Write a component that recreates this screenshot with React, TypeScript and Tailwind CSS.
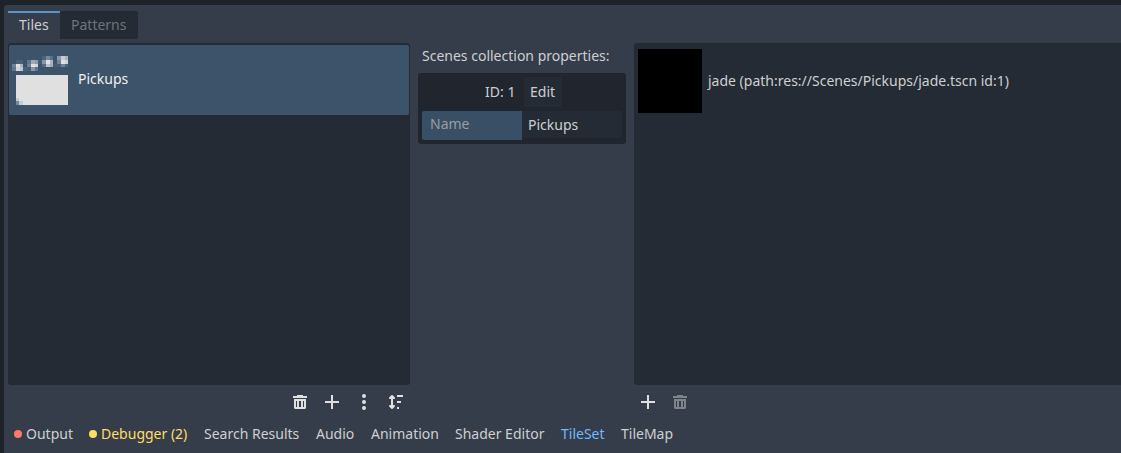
import React from "react";

const C = 3.75;

// Preview cells: [column, row, colour] on a 3.75px grid.
const cells: [number, number, string][] = [
  [1, 1, "#47617a"], [2, 1, "#47617a"],
  [0, 2, "#6c8397"], [1, 2, "#e0e0e0"], [2, 2, "#a9b5bf"],
  [0, 3, "#5f778d"], [1, 3, "#d2d6da"], [2, 3, "#c0c8cf"], [3, 3, "#47617a"],
  [4, 1, "#5f778d"], [5, 1, "#9dabb8"], [6, 1, "#8b9cab"],
  [4, 2, "#6c8397"], [5, 2, "#e0e0e0"], [6, 2, "#d2d6da"],
  [4, 3, "#445d75"], [5, 3, "#8799a9"], [6, 3, "#5f778d"],
  [8, 0, "#4b647c"], [9, 0, "#73899c"], [10, 0, "#5a7288"],
  [7, 1, "#445d75"], [8, 1, "#8799a9"], [9, 1, "#e0e0e0"], [10, 1, "#a9b5bf"],
  [8, 2, "#536c83"], [9, 2, "#b9c2ca"], [10, 2, "#a0aeba"], [11, 2, "#445d75"],
  [12, 0, "#8799a9"], [13, 0, "#c5ccd3"], [14, 0, "#a9b5bf"],
  [12, 1, "#6c8397"], [13, 1, "#e0e0e0"], [14, 1, "#cfd4d9"],
  [12, 2, "#445d75"], [13, 2, "#6c8397"], [14, 2, "#4b647c"],
];

function Preview() {
  return (
    <svg width="60" height="52" viewBox="0 0 60 52" shapeRendering="crispEdges" className="mt-[11px] ml-[3px] shrink-0">
      {cells.map(([x, y, fill], i) => (
        <rect key={i} x={x * C} y={y * C} width={C} height={C} fill={fill} />
      ))}
      <rect x="4" y="19" width="52" height="30" fill="#e0e0e0" />
      <rect x="4" y="42" width="3" height="3" fill="#c4cbd1" />
      <rect x="4" y="45" width="3" height="4" fill="#73899c" />
      <rect x="7" y="45" width="4" height="4" fill="#c4cbd1" />
    </svg>
  );
}

const icons = {
  trash: "M5 1v1H1v2h14V2h-4V1zM2 5v8.5A1.5 1.5 0 0 0 3.5 15h9a1.5 1.5 0 0 0 1.5-1.5V5zm2 2h1v6H4zm3 0h2v6H7zm4 0h1v6h-1z",
  add: "M7 1v6H1v2h6v6h2V9h6V7H9V1z",
  more: "M8 0a2 2 0 0 0 0 4 2 2 0 0 0 0-4m0 6a2 2 0 0 0 0 4 2 2 0 0 0 0-4m0 6a2 2 0 0 0 0 4 2 2 0 0 0 0-4",
  sort: "M4 1a1 1 0 0 0-.7.3l-2 2A1 1 0 0 0 2 5h1v6H2a1 1 0 0 0-.7 1.7l2 2a1 1 0 0 0 1.4 0l2-2A1 1 0 0 0 6 11H5V5h1a1 1 0 0 0 .7-1.7l-2-2A1 1 0 0 0 4 1m5 0h6v2H9zm0 6h4v2H9zm0 6h2v2H9z",
};

function Icon({ name, dim = false }: { name: keyof typeof icons; dim?: boolean }) {
  return (
    <button className="flex size-4 items-center justify-center">
      <svg width="16" height="16" viewBox="0 0 16 16" fillRule="evenodd" className={dim ? "fill-[#7f838a]" : "fill-[#e0e0e0]"}>
        <path d={icons[name]} />
      </svg>
    </button>
  );
}

export default function App() {
  return (
    <div className="h-[453px] w-[1121px] overflow-hidden bg-[#1e2229] pt-[5px] pl-1 font-['Noto_Sans',sans-serif] text-[14px] leading-5 whitespace-nowrap text-[#cdcfd2]">
      <div className="flex h-[448px] flex-col rounded-tl-[3px] bg-[#363d4a] pt-1.5 pl-1">
        <div className="flex h-7">
          <div className="w-[52px] border-t-2 border-[#5792c9] pt-[2px] pl-[11px]">Tiles</div>
          <div className="w-[78px] rounded-r-[2px] bg-[#252b34] pt-1 pl-[11px] text-[#6e7379]">Patterns</div>
        </div>

        <div className="mt-1 flex h-[342px]">
          <div className="w-[402px] rounded-[3px] bg-[#252b34] px-px pt-[2px]">
            <div className="flex h-[70px] rounded-[2px] bg-[#3c536a] text-[#f0f1f2]">
              <Preview />
              <span className="mt-6 ml-[6px]">Pickups</span>
            </div>
          </div>

          <div className="ml-2 w-[208px]">
            <div className="h-[30px] pt-[3px] pl-1">Scenes collection properties:</div>
            <div className="h-[71px] rounded-[3px] bg-[#21262e] px-1 pt-1">
              <div className="flex h-[30px]">
                <span className="w-[102px] pt-[5px] pr-[8.6px] text-right">ID: 1</span>
                <button className="h-[30px] w-[38px] rounded-[3px] bg-[#252b34] pl-1.5 text-left">Edit</button>
              </div>
              <div className="mt-1 flex h-[29px]">
                <div className="w-[100px] rounded-l-[2px] bg-[#384f66] pt-[3px] pl-2 text-[#999da3]">Name</div>
                <div className="h-[27px] flex-1 rounded-r-[3px] bg-[#252b34] pt-1 pl-1.5">Pickups</div>
              </div>
            </div>
          </div>

          <div className="ml-2 flex flex-1 rounded-l-[3px] bg-[#252b34] pt-1.5 pl-1">
            <div className="size-16 bg-black" />
            <span className="mt-[22px] ml-1.5">jade (path:res://Scenes/Pickups/jade.tscn id:1)</span>
          </div>
        </div>

        <div className="flex pt-[9px]">
          <div className="flex w-[396px] justify-end gap-4">
            <Icon name="trash" />
            <Icon name="add" />
            <Icon name="more" />
            <Icon name="sort" />
          </div>
          <div className="ml-[236px] flex gap-4">
            <Icon name="add" />
            <Icon name="trash" dim />
          </div>
        </div>

        <div className="mt-[14px] flex gap-4 pl-1.5">
          <div className="flex w-[59px] items-center gap-1">
            <i className="size-2 rounded-full bg-[#ff786b]" />Output
          </div>
          <div className="flex w-[99px] items-center gap-1 text-[#ffdd65]">
            <i className="size-2 rounded-full bg-[#ffdd65]" />Debugger (2)
          </div>
          <span className="w-24">Search Results</span>
          <span className="w-[39px]">Audio</span>
          <span className="w-[68px]">Animation</span>
          <span className="w-[90px]">Shader Editor</span>
          <span className="w-11 text-[#70bafa]">TileSet</span>
          <span>TileMap</span>
        </div>
      </div>
    </div>
  );
}
